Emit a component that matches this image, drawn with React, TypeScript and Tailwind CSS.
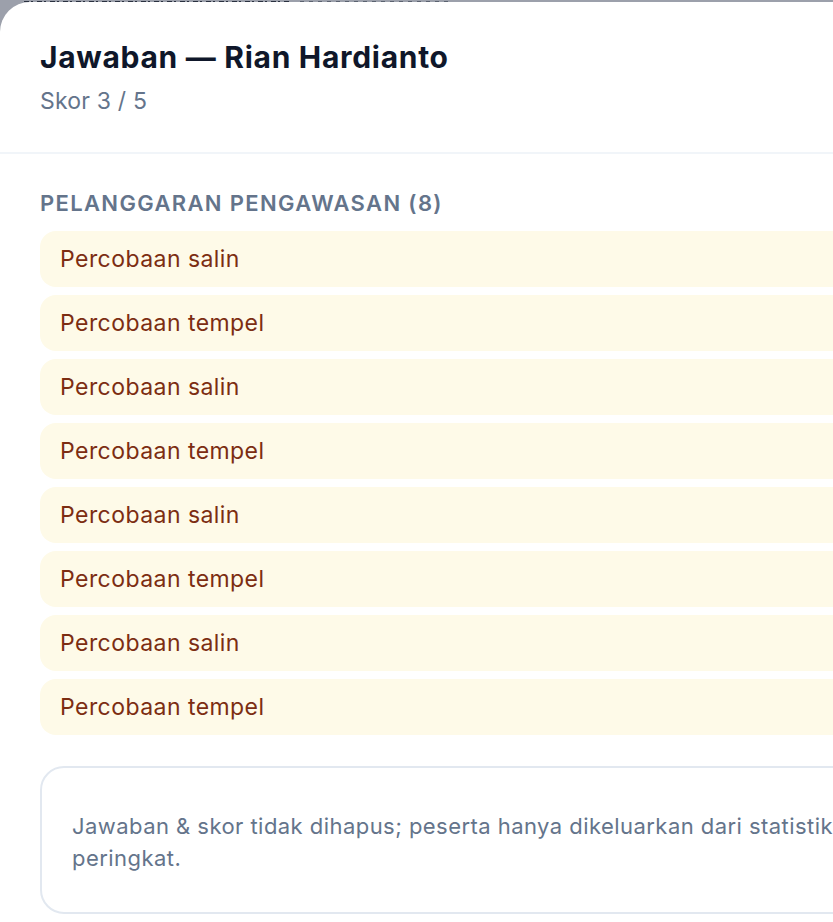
import React from 'react';

const violations = [
  'Percobaan salin',
  'Percobaan tempel',
  'Percobaan salin',
  'Percobaan tempel',
  'Percobaan salin',
  'Percobaan tempel',
  'Percobaan salin',
  'Percobaan tempel',
];

export default function App() {
  return (
    <div
      className="relative h-[922px] w-[833px] overflow-hidden bg-[#9ca0ab]"
      style={{ fontFamily: 'Inter, "Noto Sans", sans-serif' }}
    >
      {/* page behind the overlay, only the bottom edge of its title peeks through */}
      <div className="flex h-[2px] items-end gap-[10px] pl-[24px]">
        <div className="h-[1px] w-[266px] bg-[repeating-linear-gradient(90deg,#2a3140_0_5px,transparent_5px_7px,#2a3140_7px_9px,transparent_9px_13px)]" />
        <div className="h-[1px] w-[150px] bg-[repeating-linear-gradient(90deg,#5b6270_0_4px,transparent_4px_9px)]" />
      </div>

      <div className="h-[920px] w-[1040px] rounded-tl-[30px] bg-white">
        <div className="px-10 pt-[36px] pb-[36px]">
          <h2 className="text-[30px] font-bold leading-[38px] tracking-[0.7px] text-[#0f172a]">
            Jawaban — Rian Hardianto
          </h2>
          <p className="mt-[10px] text-[23px] leading-[30px] tracking-[0.2px] text-[#64748b]">
            Skor 3 / 5
          </p>
        </div>
        <div className="h-[2px] bg-[#f1f5f9]" />

        <div className="px-10 pt-[36px]">
          <h3 className="text-[22px] font-semibold uppercase leading-[26px] tracking-[1.35px] text-[#64748b]">
            Pelanggaran Pengawasan (8)
          </h3>
          <ul className="mt-[15px] flex flex-col gap-2">
            {violations.map((v, i) => (
              <li
                key={i}
                className="flex h-14 items-center rounded-[16px] bg-[#fefae8] px-5 text-[23px] tracking-[0.45px] text-[#7c2d12]"
              >
                {v}
              </li>
            ))}
          </ul>

          <div className="mt-[31px] rounded-[24px] border-2 border-[#e2e8f0] px-[30px] pt-[42px] pb-[38px]">
            <p className="max-w-[880px] text-[22px] leading-[32px] tracking-[0.45px] text-[#64748b]">
              Jawaban &amp; skor tidak dihapus; peserta hanya dikeluarkan dari statistik dan
              peringkat.
            </p>
          </div>
        </div>
      </div>
    </div>
  );
}
